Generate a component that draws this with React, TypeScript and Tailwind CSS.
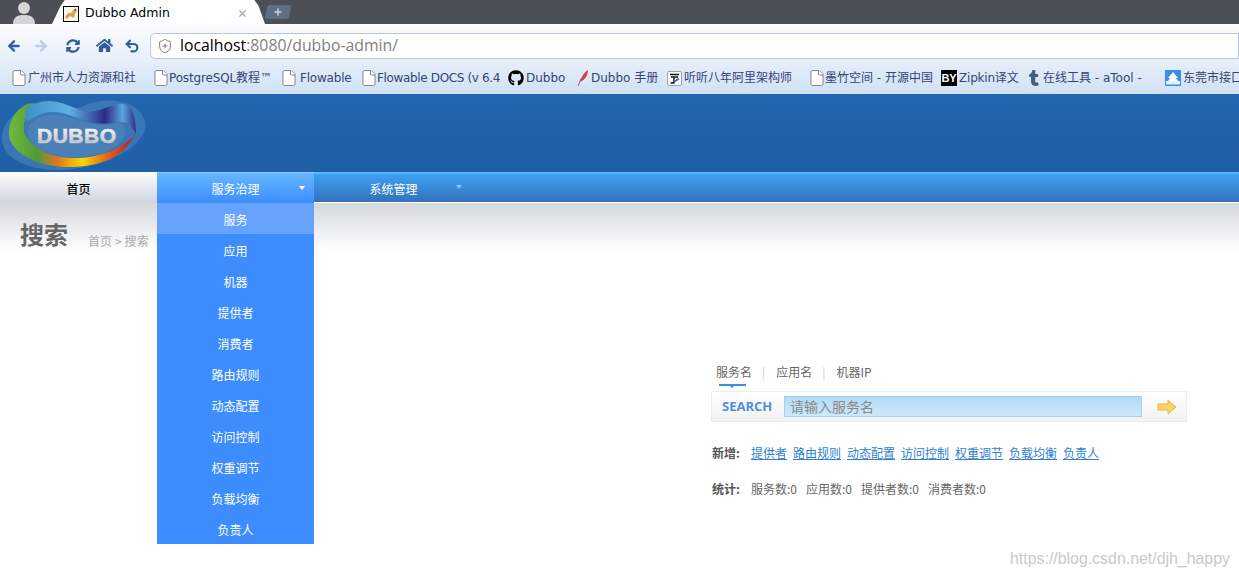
import { ArrowLeft, ArrowRight, File, Plus, ShieldPlus, Undo2, X } from "lucide-react";
import { FaGithub, FaHome, FaSyncAlt, FaTumblr } from "react-icons/fa";

const cjk = "font-['Noto_Sans_CJK_SC','Liberation_Sans',sans-serif]";

function FileIcon() {
  return <File size={18} strokeWidth={1.1} className="text-gray-500 fill-white shrink-0 -mx-[1px]" />;
}

function FeatherIcon() {
  return (
    <svg width="12" height="18" viewBox="0 0 12 18" className="shrink-0">
      <path d="M1 17 C3 11 6 4 11 1 C11 6 8 11 3 13 Z" fill="#d6403c" />
      <path d="M1 17 L4 10" stroke="#8a6ba0" strokeWidth="1" />
    </svg>
  );
}

function TingIcon() {
  return (
    <div className="w-[15px] h-[15px] shrink-0 border border-gray-400 rounded-[2px] bg-white flex items-center justify-center">
      <svg width="11" height="11" viewBox="0 0 11 11">
        <path d="M1 1.5H10M2 4H9M5 4V10H1.5" stroke="#111" strokeWidth="1.4" fill="none" />
        <path d="M5 9L10 5.5" stroke="#2a6fd0" strokeWidth="1.6" />
      </svg>
    </div>
  );
}

function ByIcon() {
  return (
    <div className="w-4 h-4 shrink-0 bg-black text-white text-[11px] leading-4 font-bold text-center font-['Liberation_Sans',sans-serif]">
      BY
    </div>
  );
}

function TumblrIcon() {
  return <FaTumblr size={16} className="text-[#44607f] shrink-0" />;
}

function CloudIcon() {
  return (
    <svg width="16" height="16" viewBox="0 0 16 16" className="shrink-0">
      <rect width="16" height="16" fill="#3b8fe8" />
      <path d="M8 2L13 8H11L13 11H3L5 8H3Z" fill="#fff" />
      <rect x="1" y="11" width="14" height="3.5" fill="#fff" opacity="0.85" />
    </svg>
  );
}

function CatFavicon() {
  return (
    <svg width="16" height="16" viewBox="0 0 16 16" className="shrink-0">
      <rect x="0.5" y="0.5" width="15" height="15" fill="#fbf6ea" stroke="#000" />
      <path d="M2 11L5 7L8 7L11 3L13 2L14 5L12 8L11 12L7 10L4 13Z" fill="#d9a558" />
      <path d="M11 4L13 3L13 5Z" fill="#6b4a1f" />
    </svg>
  );
}

const bookmarks = [
  { w: "w-[142px]", icon: <FileIcon />, text: "广州市人力资源和社", cls: "gap-[1px]" },
  { w: "w-[128px]", icon: <FileIcon />, text: "PostgreSQL教程™", cls: "tracking-[-0.15px]" },
  { w: "w-[80px]", icon: <FileIcon />, text: "Flowable", cls: "gap-[3px] tracking-[-0.2px]" },
  { w: "w-[147px]", icon: <FileIcon />, text: "Flowable DOCS (v 6.4", cls: "tracking-[-0.35px]" },
  { w: "w-[69px]", icon: <FaGithub size={16} className="text-black shrink-0" />, text: "Dubbo", cls: "gap-[2px]" },
  { w: "w-[90px]", icon: <FeatherIcon />, text: "Dubbo 手册", cls: "gap-[2px]" },
  { w: "w-[142px]", icon: <TingIcon />, text: "听听八年阿里架构师", cls: "gap-[2px]" },
  { w: "w-[132px]", icon: <FileIcon />, text: "墨竹空间 - 开源中国", cls: "" },
  { w: "w-[85px]", icon: <ByIcon />, text: "Zipkin译文", cls: "gap-[2px] tracking-[-0.2px]" },
  { w: "w-[139px]", icon: <TumblrIcon />, text: "在线工具 - aTool -", cls: "gap-[1px]" },
  { w: "w-[78px]", icon: <CloudIcon />, text: "东莞市接口", cls: "gap-[2px]" },
];

const menuItems = ["服务", "应用", "机器", "提供者", "消费者", "路由规则", "动态配置", "访问控制", "权重调节", "负载均衡", "负责人"];
const addLinks = ["提供者", "路由规则", "动态配置", "访问控制", "权重调节", "负载均衡", "负责人"];
const stats = ["服务数:0", "应用数:0", "提供者数:0", "消费者数:0"];

function ChromeBar() {
  return (
    <div className="shrink-0">
      {/* tab strip */}
      <div className="h-6 bg-[#4a5056] flex items-end relative">
        <svg width="24" height="24" viewBox="0 0 24 24" className="ml-3 shrink-0">
          <circle cx="12" cy="8" r="6" fill="#d5d5d5" />
          <path d="M1 24C1 16 7 15 12 15S23 16 23 24Z" fill="#d5d5d5" />
        </svg>
        <div className="ml-[16px] w-[213px] h-6 pt-[3px] bg-[#fdfeff] [clip-path:polygon(0_100%,4%_25%,6%_0,95%_0,97%_25%,100%_100%)] flex items-center pl-[11px] pr-[17px]">
          <CatFavicon />
          <span className="ml-[6px] text-[12.5px] text-black font-['DejaVu_Sans',sans-serif] flex-1">Dubbo Admin</span>
          <X size={11} strokeWidth={2.5} className="text-[#a5a9ad]" />
        </div>
        <div className="w-6 h-[14px] mb-[5px] ml-[1px] bg-[#5d6f82] rounded-[3px] -skew-x-12 flex items-center justify-center">
          <Plus size={10} strokeWidth={4} className="text-[#c6d2de] skew-x-12" />
        </div>
      </div>
      {/* toolbar */}
      <div className="h-[38px] pt-[5px] bg-gradient-to-b from-[#fbfcfe] to-[#e6effa] flex items-center pl-[6px] pr-0">
        <ArrowLeft size={16} strokeWidth={3.5} className="text-[#2f5e9e]" />
        <ArrowRight size={16} strokeWidth={3.5} className="ml-[11px] text-[#b9cde8]" />
        <FaSyncAlt size={14} className="ml-[17px] text-[#2f5e9e]" />
        <FaHome size={17} className="ml-[16px] text-[#2f5e9e]" />
        <Undo2 size={16} strokeWidth={3.2} className="ml-[11px] text-[#2f5e9e]" />
        <div className="ml-[10px] flex-1 h-[26px] bg-white border border-[#b7c6dc] rounded-l-[5px] flex items-center pl-[6px]">
          <ShieldPlus size={16} strokeWidth={1.3} className="text-[#666]" />
          <span className="ml-[7px] text-[15.8px] font-['Open_Sans',sans-serif] text-black">
            localhost<span className="text-[#7f7f7f]">:8080/dubbo-admin/</span>
          </span>
        </div>
      </div>
      {/* bookmarks */}
      <div className="h-8 bg-gradient-to-b from-[#e6effa] to-[#d1e0f3] flex items-center pl-[11px] overflow-hidden">
        {bookmarks.map((b) => (
          <div key={b.text} className={`${b.w} ${b.cls} shrink-0 flex items-center whitespace-nowrap text-[12px] text-[#35437a] font-['DejaVu_Sans','Noto_Sans_CJK_SC',sans-serif]`}>
            {b.icon}
            <span>{b.text}</span>
          </div>
        ))}
      </div>
    </div>
  );
}

function Logo() {
  return (
    <svg width="150" height="78" viewBox="0 0 150 78" className="shrink-0">
      <defs>
        <linearGradient id="ring" x1="0" y1="0" x2="1" y2="0">
          <stop offset="0" stopColor="#6fbb3a" />
          <stop offset="0.22" stopColor="#4f9a3a" />
          <stop offset="0.38" stopColor="#d9781f" />
          <stop offset="0.58" stopColor="#fbd800" />
          <stop offset="0.78" stopColor="#e0641c" />
          <stop offset="0.95" stopColor="#c42a24" />
        </linearGradient>
        <linearGradient id="ribbon" x1="0" y1="0" x2="1" y2="0">
          <stop offset="0" stopColor="#3f8fc8" />
          <stop offset="0.4" stopColor="#5fb2e2" />
          <stop offset="0.72" stopColor="#2b2a86" />
          <stop offset="0.88" stopColor="#5aa5dc" />
          <stop offset="1" stopColor="#2d2f85" />
        </linearGradient>
        <linearGradient id="letters" x1="0" y1="0" x2="0" y2="1">
          <stop offset="0" stopColor="#ffffff" />
          <stop offset="1" stopColor="#b8b8b8" />
        </linearGradient>
      </defs>
      <path d="M2 42C3 25 22 10 50 10C62 10 70 16 82 13C100 2 140 4 145 28C149 52 105 74 62 76C30 77 0 65 2 42Z" fill="#5b90c8" opacity="0.45" />
      <path d="M30 9C16 14 8 27 9 42C12 60 40 74 72 73C100 72 124 64 135 40C126 52 104 63 78 64C52 65 30 54 24 38C22 26 28 16 42 10Z" fill="url(#ring)" />
      <path d="M28 12C50 2 62 9 80 16C95 21 108 12 118 10C130 8 136 18 136 40C131 30 126 28 118 28C100 32 88 28 72 22C56 16 44 16 30 26C24 30 24 18 28 12Z" fill="url(#ribbon)" />
      <path d="M28 36C30 24 48 18 64 22C82 28 100 34 118 29C130 30 128 46 112 55C90 66 56 66 38 54C31 49 27 43 28 36Z" fill="#4a80b8" />
      <text x="37" y="49" fontFamily="'Liberation Sans',sans-serif" fontWeight="700" fontSize="21" stroke="url(#letters)" strokeWidth="0.6" fill="url(#letters)" textLength="79">
        DUBBO
      </text>
    </svg>
  );
}

function Nav() {
  return (
    <div className="h-[31px] shrink-0 flex bg-gradient-to-b from-[#3ca3f2] to-[#3570bc] border-t-2 border-t-[#5ab2f5] border-b border-b-white text-[12px] relative">
      <div className="w-[157px] -mt-[2px] h-[31px] pt-[2px] bg-gradient-to-b from-[#fdfdfd] to-[#cfd5df] text-black font-medium flex items-center justify-center">
        首页
      </div>
      <div className="w-[157px] -mt-[2px] h-[31px] pt-[2px] bg-gradient-to-b from-[#66b6ff] to-[#3d8dff] border-t border-t-[#8ccaff] text-white flex items-center justify-center relative">
        服务治理
        <div className="absolute right-[9px] top-[13px] border-x-[3.5px] border-x-transparent border-t-[4px] border-t-white" />
      </div>
      <div className="w-[157px] pl-[2px] pt-[2px] text-white flex items-center justify-center relative">
        系统管理
        <div className="absolute right-[9px] top-[11px] border-x-[3.5px] border-x-transparent border-t-[4px] border-t-[#8cc4f2]" />
      </div>
      {/* dropdown */}
      <div className="absolute left-[157px] top-[29px] w-[157px] z-10 flex flex-col">
        {menuItems.map((item, i) => (
          <div key={item} className={`h-[31px] pt-[3px] flex items-center justify-center text-white ${i === 0 ? "bg-[#65a3ff]" : "bg-[#3d8dff]"}`}>
            {item}
          </div>
        ))}
      </div>
    </div>
  );
}

function SearchPanel() {
  return (
    <div className="ml-[711px] w-[476px] text-[12px] text-[#666]">
      <div className="h-[28px] flex items-center pl-[5px] relative">
        <span>服务名</span>
        <span className="ml-[10px] text-[#ccc]">|</span>
        <span className="ml-[11px]">应用名</span>
        <span className="ml-[10px] text-[#ccc]">|</span>
        <span className="ml-[11px]">机器IP</span>
        <div className="absolute left-[8px] bottom-0 w-[27px] h-[2px] bg-[#3d8fe0]" />
        <div className="absolute left-[19px] -bottom-[2px] border-x-[2px] border-x-transparent border-t-[2px] border-t-[#3d8fe0]" />
      </div>
      <div className="h-[31px] mt-[5px] border border-[#ececec] bg-gradient-to-b from-white to-[#f2f2f2] flex items-center pl-[10px]">
        <span className="w-[62px] text-[13px] font-bold text-[#4a90e2] font-['Open_Sans',sans-serif]">SEARCH</span>
        <div className="w-[358px] h-[21px] border border-[#a9cfea] bg-gradient-to-b from-[#b3daf5] to-[#cdeafc] flex items-center pl-[5px] text-[14px] text-[#888]">
          请输入服务名
        </div>
        <svg width="20" height="16" viewBox="0 0 20 16" className="ml-[15px]">
          <path d="M1 5H11V1L19 8L11 15V11H1Z" fill="#fcd462" stroke="#e5b44a" strokeWidth="1" />
        </svg>
      </div>
      <div className="mt-[22px] h-[18px] flex items-center pl-[1px]">
        <b className="w-[39px] text-[#555]">新增:</b>
        <div className="flex gap-[6px]">
          {addLinks.map((l) => (
            <a key={l} href="#" className="text-[#2f7fd2] underline">
              {l}
            </a>
          ))}
        </div>
      </div>
      <div className="mt-[18px] h-[18px] flex items-center pl-[1px]">
        <b className="w-[39px] text-[#555]">统计:</b>
        <div className="flex gap-[9px]">
          {stats.map((s) => (
            <span key={s}>{s}</span>
          ))}
        </div>
      </div>
    </div>
  );
}

export default function App() {
  return (
    <div className={`w-[1239px] h-[578px] overflow-hidden flex flex-col bg-white relative ${cjk}`}>
      <ChromeBar />
      <div className="h-[78px] shrink-0 bg-gradient-to-b from-[#2166ae] to-[#1f5fa6]">
        <Logo />
      </div>
      <Nav />
      <div className="flex-1 relative">
        <div className="h-[48px] bg-gradient-to-b from-[#d5d8dd] to-white" />
        <div className="absolute left-[20px] top-[13px] flex items-end">
          <span className="text-[24px] leading-[36px] font-bold text-[#666]">搜索</span>
          <span className="ml-[20px] mb-[2px] text-[12px] tracking-[0.1px] text-[#aaa]">首页 &gt; 搜索</span>
        </div>
        <div className="pt-[107px]">
          <SearchPanel />
        </div>
        <div className="absolute right-[9px] bottom-[7px] text-[15.9px] text-[#c9c9c9] font-['Liberation_Sans',sans-serif]">
          https://blog.csdn.net/djh_happy
        </div>
      </div>
    </div>
  );
}
